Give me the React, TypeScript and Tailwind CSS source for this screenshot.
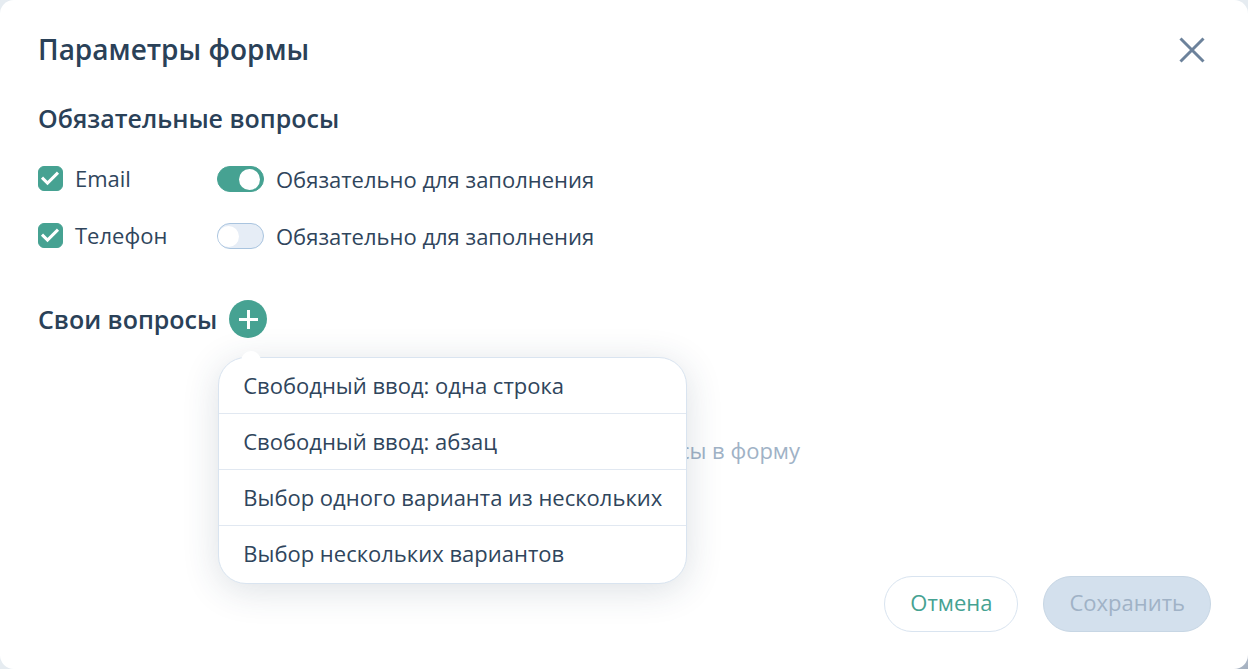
import { useState, type ReactNode } from "react";

type Field = {
  id: string;
  label: string;
  enabled: boolean;
  required: boolean;
};

const initialFields: Field[] = [
  { id: "email", label: "Email", enabled: true, required: true },
  { id: "phone", label: "Телефон", enabled: true, required: false },
];

const questionTypes = [
  "Свободный ввод: одна строка",
  "Свободный ввод: абзац",
  "Выбор одного варианта из нескольких",
  "Выбор нескольких вариантов",
];

export default function App() {
  const [fields, setFields] = useState(initialFields);
  const [isMenuOpen, setIsMenuOpen] = useState(true);

  const updateField = (id: string, patch: Partial<Field>) => {
    setFields((prev) => prev.map((field) => (field.id === id ? { ...field, ...patch } : field)));
  };

  return (
    <div className="min-h-screen bg-linear-to-br from-[#e6ecf1] from-95% to-[#a3afbf] font-['Open_Sans',sans-serif] text-[22px] leading-[30px] text-[#2f455c]">
      <div
        role="dialog"
        aria-labelledby="form-settings-title"
        className="flex min-h-screen flex-col rounded-[14px] bg-white pt-[31px] pr-[37px] pb-[37px] pl-[38px]"
      >
        <header className="flex items-center justify-between">
          <h1
            id="form-settings-title"
            className="pb-0.5 text-[28px] leading-9 font-semibold text-[#2a4158]"
          >
            Параметры формы
          </h1>
          <button type="button" aria-label="Закрыть" className="mr-1.5 text-[#6c829b]">
            <CloseIcon />
          </button>
        </header>

        <section className="mt-[30px]">
          <SectionTitle>Обязательные вопросы</SectionTitle>
          <div className="mt-[25px] flex flex-col gap-[25px]">
            {fields.map((field) => (
              <div key={field.id} className="flex items-center">
                <Checkbox
                  label={field.label}
                  checked={field.enabled}
                  onChange={(enabled) => updateField(field.id, { enabled })}
                />
                <Switch
                  label="Обязательно для заполнения"
                  checked={field.required}
                  onChange={(required) => updateField(field.id, { required })}
                />
              </div>
            ))}
          </div>
        </section>

        <section className="mt-[49px]">
          <div className="flex items-center gap-3">
            <SectionTitle>Свои вопросы</SectionTitle>
            <div className="relative">
              <button
                type="button"
                aria-label="Добавить вопрос"
                aria-haspopup="menu"
                aria-expanded={isMenuOpen}
                onClick={() => setIsMenuOpen((prev) => !prev)}
                className="flex size-[38px] items-center justify-center rounded-full bg-[#46a292] text-white"
              >
                <PlusIcon />
              </button>
              {isMenuOpen ? <QuestionMenu onSelect={() => setIsMenuOpen(false)} /> : null}
            </div>
          </div>
          <p className="mt-[97px] text-center text-[#a0b2c6]">Добавьте свои вопросы в форму</p>
        </section>

        <footer className="mt-auto flex justify-end gap-[25px]">
          <button
            type="button"
            className="h-14 rounded-full border border-[#d9e4f0] px-[25px] pb-1 text-[#46a292]"
          >
            Отмена
          </button>
          <button
            type="button"
            disabled
            className="h-14 rounded-full border border-[#c7d6e4] bg-[#d3e0ed] px-[25px] pb-1 text-[#a0b2c6]"
          >
            Сохранить
          </button>
        </footer>
      </div>
    </div>
  );
}

function SectionTitle({ children }: { children: ReactNode }) {
  return <h2 className="text-[25px] leading-[38px] font-semibold text-[#2a4158]">{children}</h2>;
}

type ToggleProps = {
  label: string;
  checked: boolean;
  onChange: (checked: boolean) => void;
};

function Checkbox({ label, checked, onChange }: ToggleProps) {
  return (
    <label className="flex w-[179px] items-center gap-3">
      <span className="grid size-[25px] shrink-0">
        <input
          type="checkbox"
          checked={checked}
          onChange={(event) => onChange(event.target.checked)}
          className="peer col-start-1 row-start-1 size-full appearance-none rounded-md border border-[#b3c9df] checked:border-[#46a292] checked:bg-[#46a292]"
        />
        <svg
          viewBox="0 0 25 25"
          className="pointer-events-none col-start-1 row-start-1 hidden size-full text-white peer-checked:block"
          fill="none"
          stroke="currentColor"
          strokeWidth="3"
        >
          <path d="M4 11.6 9.5 17.1 20 6.6" />
        </svg>
      </span>
      {label}
    </label>
  );
}

function Switch({ label, checked, onChange }: ToggleProps) {
  return (
    <label className="flex items-center gap-3 pt-0.5">
      <span className="grid h-[26px] w-[47px] shrink-0 items-center">
        <input
          type="checkbox"
          role="switch"
          checked={checked}
          onChange={(event) => onChange(event.target.checked)}
          className="peer col-start-1 row-start-1 size-full appearance-none rounded-full border border-[#a9c4df] bg-[#e6edf6] checked:border-[#46a292] checked:bg-[#46a292]"
        />
        <span className="pointer-events-none col-start-1 row-start-1 ml-px size-[21px] rounded-full bg-white peer-checked:ml-[22px]" />
      </span>
      {label}
    </label>
  );
}

function QuestionMenu({ onSelect }: { onSelect: () => void }) {
  return (
    <div
      role="menu"
      className="absolute top-[57px] -left-[11px] z-10 rounded-[28px] border border-[#d9e4f0] bg-white pb-px shadow-[0_6px_36px_rgba(38,61,84,0.16)]"
    >
      <span className="absolute -top-[7px] left-[22px] h-2.5 w-5 rounded-t-full bg-white" />
      {questionTypes.map((type) => (
        <button
          key={type}
          type="button"
          role="menuitem"
          onClick={onSelect}
          className="block h-14 w-full border-b border-[#e1e8f1] px-6 pb-0.5 text-left whitespace-nowrap last:border-b-0"
        >
          {type}
        </button>
      ))}
    </div>
  );
}

function CloseIcon() {
  return (
    <svg viewBox="0 0 26 26" className="size-[26px]" fill="none" stroke="currentColor" strokeWidth="3">
      <path d="M1.5 1.5 24.5 24.5M24.5 1.5 1.5 24.5" />
    </svg>
  );
}

function PlusIcon() {
  return (
    <svg viewBox="0 0 38 38" className="size-[38px]" fill="none" stroke="currentColor" strokeWidth="3">
      <path d="M19.5 10v19M10 19.5h19" />
    </svg>
  );
}
